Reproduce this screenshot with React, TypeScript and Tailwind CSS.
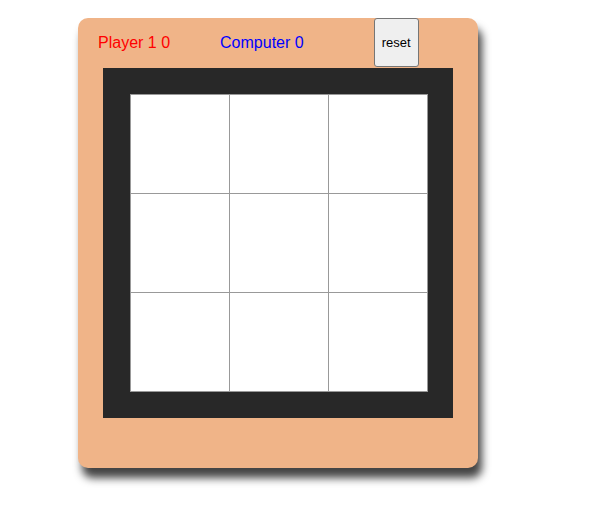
const cells = [0, 1, 2, 3, 4, 5, 6, 7, 8]

const App = () => {
    return (
        <div className="min-h-[510px] w-[597px] bg-white pl-[78px] pt-[18px] font-['Liberation_Sans',Arial,sans-serif]">
            <div className="w-[400px] h-[450px] rounded-[10px] bg-[#f0b488] shadow-[4px_10px_8px_#444]">
                <div className="flex items-center h-[50px] pl-[20px]">
                    <span className="text-[16px] text-[#ff0000]">Player 1 0</span>
                    <span className="ml-[50px] text-[16px] text-[#0000ff]">Computer 0</span>
                    <button className="ml-[70px] self-start w-[45px] h-[49px] bg-[#efefef] border border-[#767676] rounded-[3px] text-[13px] text-black">
                        reset
                    </button>
                </div>
                <div className="ml-[25px] w-[350px] h-[350px] bg-[#282828] pl-[27px] pt-[26px]">
                    <div className="grid grid-cols-[repeat(3,99px)] grid-rows-[repeat(3,99px)] w-[298px] h-[298px] border-t border-l border-[#999] bg-white">
                        {cells.map((c) => (
                            <div key={c} className="border-r border-b border-[#999] bg-white"></div>
                        ))}
                    </div>
                </div>
            </div>
        </div>
    )
}

export default App
